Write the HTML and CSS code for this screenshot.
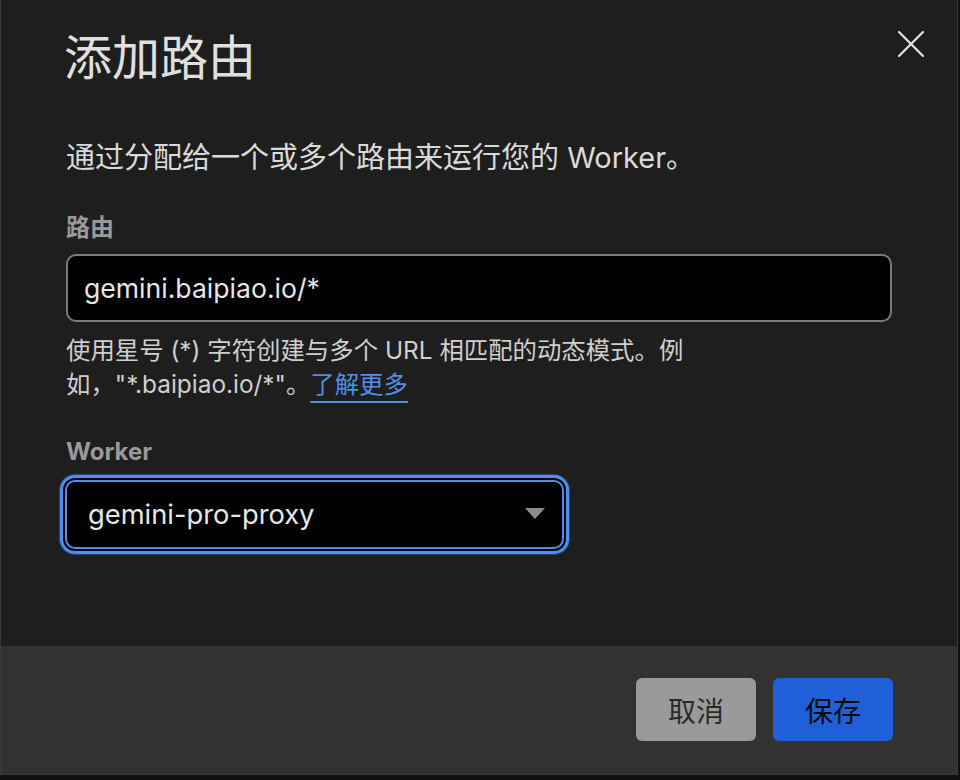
FILE: index.html
```html
<!DOCTYPE html>
<html lang="zh">
<head>
<meta charset="utf-8">
<title>添加路由</title>
<link rel="stylesheet" href="styles.css">
</head>
<body>
<div class="dialog">
  <div class="dialog-body">
    <div class="header">
      <h1 class="title">添加路由</h1>
      <button class="close" aria-label="关闭">
        <svg width="26" height="26" viewBox="0 0 26 26"><path d="M1 1 L25 25 M25 1 L1 25" stroke="#e4e4e4" stroke-width="2.2" stroke-linecap="round" fill="none"/></svg>
      </button>
    </div>
    <div class="content">
      <p class="desc">通过分配给一个或多个路由来运行您的 Worker。</p>
      <label class="label label-route">路由</label>
      <div class="input">gemini.baipiao.io/*</div>
      <p class="help">使用星号 (*) 字符创建与多个 URL 相匹配的动态模式。例如，"*.baipiao.io/*"。<a class="link" href="#">了解更多</a></p>
      <label class="label label-worker">Worker</label>
      <div class="select">
        <span class="select-value">gemini-pro-proxy</span>
        <svg class="caret" width="20" height="11" viewBox="0 0 20 11"><path d="M0 0 H20 L10 11 Z" fill="#8c8c8c"/></svg>
      </div>
    </div>
  </div>
  <div class="footer">
    <button class="btn btn-cancel">取消</button>
    <button class="btn btn-save">保存</button>
  </div>
</div>
</body>
</html>
```
FILE: styles.css
```css
* { box-sizing: border-box; }
html, body { margin: 0; padding: 0; }
body {
  background: #101010;
  width: 960px;
  height: 780px;
  font-family: "Inter", "Noto Sans CJK SC", sans-serif;
  overflow: hidden;
}
.dialog {
  width: 958px;
  height: 775px;
  background: #1e1e1e;
  border: 1px solid #3a3a3a;
  border-top: none;
  display: flex;
  flex-direction: column;
}
.dialog-body { flex: 1; }
.header {
  display: flex;
  justify-content: space-between;
  align-items: flex-start;
  padding: 30px 33px 0 63px;
}
.title {
  margin: 0;
  font-size: 48px;
  line-height: 56px;
  font-weight: 400;
  color: #e0e0e0;
}
.close {
  background: none;
  border: none;
  padding: 0;
  margin-top: 1px;
  width: 26px;
  height: 26px;
  cursor: pointer;
  display: block;
}
.close svg { display: block; }
.content {
  padding: 0 65px 0 65px;
}
.desc {
  margin: 52px 0 0;
  font-size: 29px;
  line-height: 40px;
  color: #dadada;
}
.label {
  display: block;
  font-size: 24px;
  line-height: 32px;
  font-weight: 700;
  color: #9a9a9a;
}
.label-route { margin-top: 34px; }
.label-worker { margin-top: 35px; }
.input {
  margin-top: 10px;
  height: 68px;
  background: #000;
  border: 2px solid #7b7b7b;
  border-radius: 10px;
  padding: 0 0 0 16px;
  display: flex;
  align-items: center;
  font-size: 26.6px;
  color: #e6e6e6;
}
.help {
  margin: 11px 0 0;
  width: 630px;
  font-size: 24.4px;
  line-height: 34px;
  color: #cfcfcf;
}
.link {
  color: #4f8fe6;
  text-decoration: underline;
  text-decoration-thickness: 2px;
  text-underline-offset: 8px;
}
.select {
  margin-top: 12px;
  width: 499px;
  margin-left: -1px;
  height: 69px;
  background: #000;
  border: 2px solid #4d8ff0;
  border-radius: 10px;
  box-shadow: 0 0 0 2px #000, 0 0 0 5px #4d8ff0, 0 0 1px 6px rgba(77,143,240,0.35);
  display: flex;
  align-items: center;
  justify-content: space-between;
  padding: 0 17px 0 21px;
  font-size: 27.3px;
  color: #e6e6e6;
}
.caret { display: block; margin-top: -2px; }
.footer {
  height: 128px;
  background: #323232;
  display: flex;
  justify-content: flex-end;
  align-items: flex-start;
  gap: 17px;
  padding: 32px 64px 0 0;
}
.btn {
  width: 120px;
  height: 63px;
  border: none;
  border-radius: 6px;
  font-family: "Inter", "Noto Sans CJK SC", sans-serif;
  font-size: 28px;
  cursor: pointer;
}
.btn-cancel { background: #9a9a9a; color: #2a2a2a; }
.btn-save { background: #1f5fd8; color: #0c0c0c; }
```
